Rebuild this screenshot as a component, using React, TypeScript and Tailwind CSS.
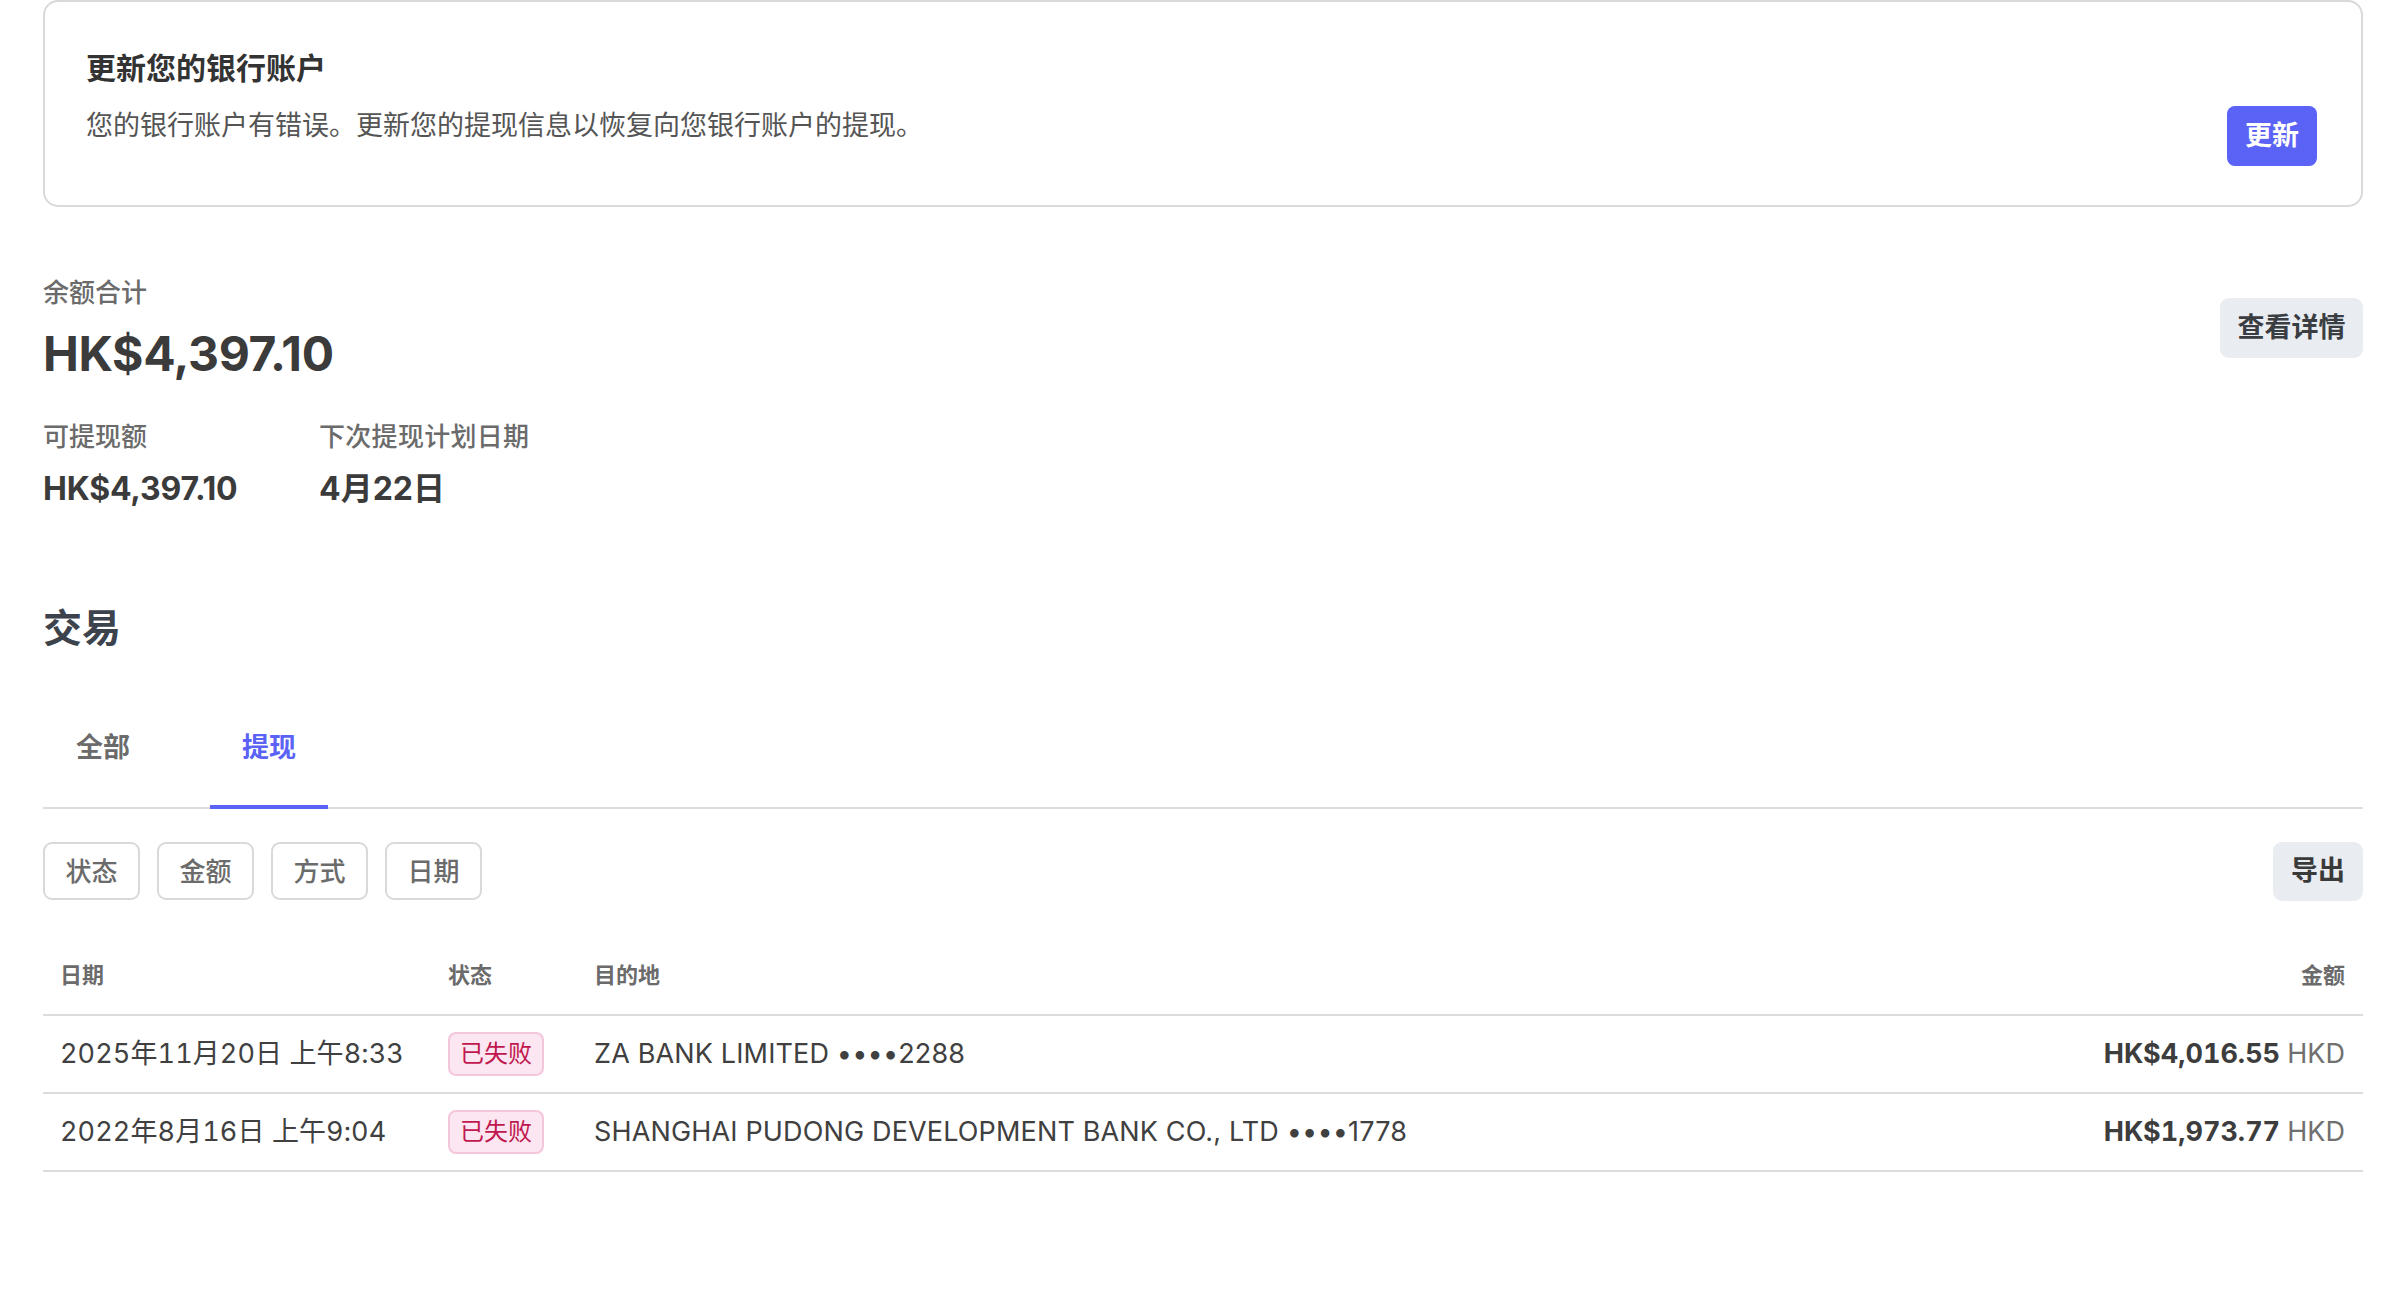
import React from "react";

const rows = [
  {
    date: "2025年11月20日 上午8:33",
    dest: "ZA BANK LIMITED ••••2288",
    amount: "HK$4,016.55",
  },
  {
    date: "2022年8月16日 上午9:04",
    dest: "SHANGHAI PUDONG DEVELOPMENT BANK CO., LTD ••••1778",
    amount: "HK$1,973.77",
  },
];

const filters = ["状态", "金额", "方式", "日期"];

export default function App() {
  return (
    <div className="min-h-[1314px] w-[2398px] bg-white font-['Inter','Noto_Sans_CJK_SC',sans-serif] text-[#404040]">
      <div className="ml-[43px] w-[2320px]">
        {/* Alert card */}
        <div className="flex h-[207px] justify-between rounded-[15px] border-2 border-[#d9d9d9] pl-[41px] pr-[44px]">
          <div className="pt-[48px]">
            <h2 className="text-[30px] leading-[36px] font-bold text-[#333333]">更新您的银行账户</h2>
            <p className="mt-[22px] text-[27px] leading-[36px] text-[#555555]">
              您的银行账户有错误。更新您的提现信息以恢复向您银行账户的提现。
            </p>
          </div>
          <button className="mt-[104px] h-[60px] w-[90px] rounded-[8px] bg-[#5b62f6] text-[27px] font-bold text-white">
            更新
          </button>
        </div>

        {/* Balance */}
        <div className="mt-[69px] flex items-start justify-between">
          <div>
            <div className="text-[26px] leading-[34px] font-medium text-[#6b6b6b]">余额合计</div>
            <div className="mt-[15px] text-[48px] leading-[58px] font-bold tracking-[-0.4px] text-[#3b3b3b]">
              HK$4,397.10
            </div>
            <div className="mt-[37px] flex">
              <div className="w-[276px]">
                <div className="text-[26px] leading-[34px] font-medium text-[#6b6b6b]">可提现额</div>
                <div className="mt-[15px] text-[32px] leading-[40px] font-bold tracking-[-0.2px] text-[#3b3b3b]">
                  HK$4,397.10
                </div>
              </div>
              <div>
                <div className="text-[26px] leading-[34px] font-medium tracking-[0.3px] text-[#6b6b6b]">下次提现计划日期</div>
                <div className="mt-[15px] text-[32px] leading-[40px] font-bold text-[#3b3b3b]">4月22日</div>
              </div>
            </div>
          </div>
          <button className="mt-[22px] h-[60px] w-[143px] rounded-[9px] bg-[#e9ecf0] text-[27px] font-bold text-[#3a3d42]">
            查看详情
          </button>
        </div>

        {/* Transactions */}
        <h3 className="mt-[95px] text-[39px] leading-[48px] font-semibold text-[#3d434d]">交易</h3>

        <div className="mt-[78px] flex gap-[47px] border-b-2 border-[#dcdcdc]">
          <div className="-mb-[2px] border-b-4 border-transparent px-[33px] pb-[39px] text-[27px] leading-[36px] font-semibold text-[#6b6b6b]">
            全部
          </div>
          <div className="-mb-[2px] border-b-4 border-[#5b62f6] px-[32px] pb-[39px] text-[27px] leading-[36px] font-semibold text-[#5b62f6]">
            提现
          </div>
        </div>

        <div className="mt-[33px] flex items-start justify-between">
          <div className="flex gap-[17px]">
            {filters.map((f) => (
              <button
                key={f}
                className="h-[58px] w-[97px] rounded-[9px] border-2 border-[#d9d9d9] text-[26px] font-medium text-[#6b6b6b]"
              >
                {f}
              </button>
            ))}
          </div>
          <button className="h-[59px] w-[90px] rounded-[9px] bg-[#e9ecf0] text-[27px] font-bold text-[#3a3a3a]">
            导出
          </button>
        </div>

        {/* Table */}
        <div className="mt-[44px]">
          <div className="flex border-b-2 border-[#dcdcdc] pt-[15px] pb-[24px] text-[22px] leading-[30px] font-bold text-[#6b6b6b]">
            <div className="w-[405px] pl-[17px]">日期</div>
            <div className="w-[146px]">状态</div>
            <div className="flex-1">目的地</div>
            <div className="pr-[18px] text-right">金额</div>
          </div>
          {rows.map((r) => (
            <div key={r.date} className="flex h-[78px] items-center border-b-2 border-[#dcdcdc] text-[27px] text-[#404040]">
              <div className="w-[405px] pl-[17px] tabular-nums tracking-[0.1px]">{r.date}</div>
              <div className="w-[146px]">
                <span className="inline-flex h-[44px] w-[96px] items-center justify-center rounded-[8px] border-2 border-[#f4c6dc] bg-[#fbe6f1] text-[24px] text-[#c0174e]">
                  已失败
                </span>
              </div>
              <div className="flex-1 tracking-[0.15px]">{r.dest}</div>
              <div className="pr-[18px] text-right tabular-nums">
                <span className="font-bold text-[#3d3d3d]">{r.amount}</span>
                <span className="text-[#707070]"> HKD</span>
              </div>
            </div>
          ))}
        </div>
      </div>
    </div>
  );
}
